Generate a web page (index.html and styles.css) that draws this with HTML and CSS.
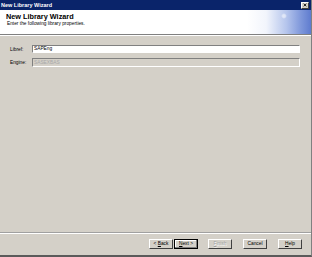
FILE: index.html
```html
<!DOCTYPE html>
<html>
<head>
<meta charset="utf-8">
<link rel="stylesheet" href="styles.css">
</head>
<body>
<div class="window">
  <div class="titlebar">
    <span class="title">New Library Wizard</span>
    <span class="close">
      <svg width="6" height="6" viewBox="0 0 6 6"><path d="M1 1L5 5M5 1L1 5" stroke="#000" stroke-width="1.2"/></svg>
    </span>
  </div>
  <div class="header">
    <div class="header-text">
      <div class="h-title">New Library Wizard</div>
      <div class="h-sub">Enter the following library properties.</div>
    </div>
    <div class="header-art"><span class="orb"></span></div>
  </div>
  <div class="content">
    <div class="row">
      <span class="label">Libref:</span>
      <div class="field">SAPEng</div>
    </div>
    <div class="row">
      <span class="label">Engine:</span>
      <div class="field disabled">SASEXBAS</div>
    </div>
  </div>
  <div class="footer">
    <div class="btn-group">
      <button class="btn">&lt; <u>B</u>ack</button>
      <button class="btn default"><u>N</u>ext &gt;</button>
    </div>
    <button class="btn off"><u>F</u>inish</button>
    <button class="btn">Cancel</button>
    <button class="btn"><u>H</u>elp</button>
  </div>
</div>
</body>
</html>
```
FILE: styles.css
```css
html, body {
  margin: 0;
  padding: 0;
}
body {
  width: 312px;
  height: 257px;
  background: #d4d0c8;
  font-family: "Liberation Sans", Arial, sans-serif;
  overflow: hidden;
}
.window {
  width: 312px;
  height: 257px;
  box-sizing: border-box;
  display: flex;
  flex-direction: column;
  border-right: 1px solid #808080;
  border-bottom: 2px solid #5a5a5a;
}
.titlebar {
  height: 10px;
  background: #0a246a;
  display: flex;
  align-items: center;
  justify-content: space-between;
  padding: 0 2px 0 1px;
}
.title {
  color: #fff;
  font-weight: bold;
  font-size: 5.5px;
}
.close {
  width: 8px;
  height: 7px;
  background: #d4d0c8;
  box-sizing: border-box;
  border: 1px solid;
  border-color: #fff #404040 #404040 #fff;
  display: flex;
  align-items: center;
  justify-content: center;
}
.close svg { width: 4px; height: 4px; }
.header {
  height: 24px;
  background: #fff;
  display: flex;
  border-bottom: 1px solid #808080;
  box-shadow: 0 1px 0 #fff;
}
.header-text {
  flex: 1;
  padding: 3px 0 0 6px;
}
.h-title {
  font-weight: bold;
  font-size: 7.3px;
  color: #000;
  line-height: 8px;
}
.h-sub {
  font-size: 4.8px;
  color: #000;
  line-height: 6px;
  padding-left: 1px;
}
.header-art {
  width: 64px;
  background: linear-gradient(to right, #ffffff 0%, #f2f5fc 30%, #b4c4ec 62%, #7d96da 85%, #5f7ccf 100%);
  position: relative;
}
.orb {
  position: absolute;
  left: 34px;
  top: 3px;
  width: 6px;
  height: 6px;
  border-radius: 50%;
  background: radial-gradient(circle, rgba(255,255,255,0.55) 30%, rgba(255,255,255,0) 70%);
}
.content {
  flex: 1;
  padding: 10px 11px 0 10px;
  display: flex;
  flex-direction: column;
  gap: 5px;
}
.row {
  display: flex;
  align-items: center;
}
.label {
  width: 22px;
  font-size: 4.8px;
  color: #000;
}
.field {
  flex: 1;
  height: 8px;
  box-sizing: border-box;
  background: #fff;
  border-top: 1px solid #808080;
  border-left: 1px solid #808080;
  border-bottom: 1px solid #fff;
  border-right: 1px solid #fff;
  font-size: 4.8px;
  line-height: 6px;
  padding-left: 1px;
  color: #000;
}
.field.disabled {
  background: #d4d0c8;
  color: #a8a8a8;
  height: 9px;
  line-height: 7px;
}
.footer {
  height: 21px;
  border-top: 1px solid #a0a0a0;
  box-shadow: inset 0 1px 0 #fff;
  display: flex;
  align-items: center;
  justify-content: flex-end;
  padding: 0 9px 1px 0;
  gap: 11px;
}
.btn-group {
  display: flex;
  gap: 1px;
  margin-right: -1px;
}
.btn {
  width: 24px;
  height: 10px;
  padding: 0;
  margin: 0;
  box-sizing: border-box;
  background: #d4d0c8;
  border: 1px solid;
  border-color: #fff #404040 #404040 #fff;
  font-family: "Liberation Sans", Arial, sans-serif;
  font-size: 4.8px;
  line-height: 6px;
  color: #000;
}
.btn u { text-decoration: underline; }
.btn.default {
  border: 1px solid #000;
  box-shadow: inset -1px -1px 0 #808080, inset 1px 1px 0 #fff;
}
.btn.off {
  color: #a0a0a0;
  text-shadow: 0.5px 0.5px 0 #fff;
}
```
